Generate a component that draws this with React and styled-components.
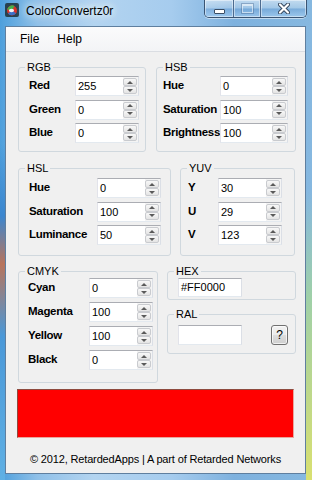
import React from "react";
import styled, { createGlobalStyle } from "styled-components";

const GlobalStyle = createGlobalStyle`
  html, body {
    margin: 0;
    padding: 0;
  }
  body {
    width: 312px;
    height: 480px;
    overflow: hidden;
    font-family: "Liberation Sans", Arial, sans-serif;
  }
`;

const Window = styled.div`
  width: 312px;
  height: 480px;
  display: flex;
  flex-direction: column;
  box-sizing: border-box;
  background:
    linear-gradient(to bottom, rgba(255, 255, 255, 0) 40%, #9fd0a8 62%, #d9e070 100%) right top / 6px 100% no-repeat,
    linear-gradient(to bottom, rgba(255, 255, 255, 0) 30%, #3b86cf 45%, #b8745c 55%, #4a98d8 70%, #5fb0e4 100%) left top / 5px 100% no-repeat,
    linear-gradient(to right, #4d9fdc 0%, #8fc0e8 12%, #b3d4f0 30%, #a6ccee 55%, #7eb1de 75%, #86b8e0 100%);
`;

const TitleBar = styled.div`
  height: 26px;
  display: flex;
  align-items: flex-start;
`;

const TitleIcon = styled.svg`
  margin: 3px 0 0 5px;
  flex: none;
`;

const TitleText = styled.span`
  margin: 4px 0 0 7px;
  font-size: 12px;
  line-height: 14px;
  color: #000;
  text-shadow: 0 0 6px #e8f3fc, 0 0 10px #e8f3fc, 0 0 14px #dceefa;
`;

const Captions = styled.div`
  margin-left: auto;
  margin-right: 5px;
  display: flex;
  height: 18px;
  box-sizing: border-box;
  border: 1px solid #3a5473;
  border-top: none;
  border-radius: 0 0 5px 5px;
  overflow: hidden;
  box-shadow: 0 1px 0 rgba(255, 255, 255, 0.5);
`;

const CaptionButton = styled.div`
  width: ${(p) => p.$w}px;
  height: 100%;
  box-sizing: border-box;
  display: flex;
  align-items: center;
  justify-content: center;
  border-left: ${(p) => (p.$first ? "none" : "1px solid #4d6b8f")};
  box-shadow: inset 0 0 0 1px rgba(255, 255, 255, 0.45);
  background: linear-gradient(
    to bottom,
    rgba(255, 255, 255, 0.5) 0%,
    rgba(255, 255, 255, 0.25) 48%,
    rgba(90, 140, 200, 0.25) 52%,
    rgba(190, 225, 255, 0.4) 100%
  );
`;

const MinGlyph = styled.div`
  width: 9px;
  height: 3px;
  margin-top: 5px;
  background: #fff;
  border: 1px solid #3a4e66;
  border-radius: 1px;
`;

const MaxGlyph = styled.div`
  width: 9px;
  height: 6px;
  border: 1px solid rgba(255, 255, 255, 0.55);
  border-top-width: 2px;
  box-shadow: 0 0 0 1px rgba(60, 90, 130, 0.35);
`;

const Client = styled.div`
  flex: 1;
  margin: 0 6px 6px 5px;
  background: #f0f0f0;
  border: 1px solid #5f7f9f;
  display: flex;
  flex-direction: column;
`;

const MenuBar = styled.div`
  height: 24px;
  display: flex;
  align-items: center;
  padding-left: 5px;
  background: linear-gradient(to bottom, #fbfbfc, #f3f4f6);
  border-bottom: 1px solid #dadde2;
`;

const MenuItem = styled.span`
  padding: 0 9px;
  font-size: 12px;
  line-height: 14px;
  color: #000;
`;

const Content = styled.div`
  padding: 9px 0 0 12px;
  display: flex;
  flex-direction: column;
`;

const Row = styled.div`
  display: flex;
  align-items: flex-start;
  gap: ${(p) => p.$gap}px;
  margin-top: ${(p) => p.$top || 0}px;
`;

const Column = styled.div`
  display: flex;
  flex-direction: column;
  gap: ${(p) => p.$gap}px;
`;

const Group = styled.fieldset`
  margin: 0;
  padding: 0;
  min-width: 0;
  width: ${(p) => p.$w}px;
  box-sizing: border-box;
  border: 1px solid #d0d8de;
  border-radius: 3px;
`;

const Legend = styled.legend`
  margin-left: 6px;
  padding: 0 2px;
  font-size: 11px;
  line-height: 13px;
  color: #000;
`;

const Body = styled.div`
  display: grid;
  grid-template-columns: ${(p) => p.$lw}px ${(p) => p.$sw}px;
  row-gap: ${(p) => p.$gap}px;
  align-items: center;
  padding: ${(p) => p.$pt}px 0 ${(p) => p.$pb}px ${(p) => p.$pl}px;
`;

const Label = styled.span`
  font-size: 11.5px;
  font-weight: bold;
  letter-spacing: -0.3px;
  line-height: 14px;
  color: #000;
  white-space: nowrap;
  margin-top: -2px;
`;

const SpinBox = styled.div`
  display: flex;
  height: 20px;
  box-sizing: border-box;
  border: 1px solid;
  border-color: #abadb3 #dbdfe6 #e3e9ef #e2e3ea;
  background: #fff;
`;

const Value = styled.span`
  flex: 1;
  padding-left: 2px;
  font-size: 11px;
  line-height: 18px;
  color: #000;
`;

const Arrows = styled.div`
  width: 15px;
  display: flex;
  flex-direction: column;
  padding: 1px 1px 1px 0;
  box-sizing: border-box;
  background: #f4f4f4;
`;

const ArrowButton = styled.div`
  flex: 1;
  display: flex;
  align-items: center;
  justify-content: center;
  border: 1px solid #c9cbcf;
  border-radius: 2px;
  background: linear-gradient(to bottom, #f8f8f8, #e4e4e4);
  &::after {
    content: "";
    border-left: 3px solid transparent;
    border-right: 3px solid transparent;
    ${(p) =>
      p.$up
        ? "border-bottom: 3px solid #5a5a5a;"
        : "border-top: 3px solid #5a5a5a;"}
  }
`;

const FieldRow = styled.div`
  display: flex;
  align-items: center;
  gap: ${(p) => p.$gap || 0}px;
  padding: ${(p) => p.$pt}px 0 ${(p) => p.$pb}px 10px;
`;

const TextBox = styled.div`
  width: 64px;
  height: ${(p) => p.$h}px;
  box-sizing: border-box;
  border: 1px solid;
  border-color: #abadb3 #dbdfe6 #e3e9ef #e2e3ea;
  background: #fff;
  padding-left: 2px;
  font-size: 11px;
  line-height: ${(p) => p.$h - 2}px;
  color: #000;
`;

const HelpButton = styled.div`
  width: 17px;
  height: 20px;
  box-sizing: border-box;
  border: 1px solid #707070;
  border-radius: 3px;
  background: linear-gradient(to bottom, #f2f2f2 0%, #ebebeb 48%, #dddddd 52%, #cfcfcf 100%);
  box-shadow: inset 0 0 0 1px rgba(255, 255, 255, 0.7);
  display: flex;
  align-items: center;
  justify-content: center;
  font-size: 12px;
  color: #000;
`;

const Swatch = styled.div`
  margin: 6px 0 0 -1px;
  width: 277px;
  height: 49px;
  box-sizing: border-box;
  background: ${(p) => p.$color};
  border: 1px solid;
  border-color: #8e4a3e #e9a69d #e9a69d #8e4a3e;
`;

const Footer = styled.div`
  margin-top: 15px;
  text-align: center;
  font-size: 11px;
  line-height: 13px;
  letter-spacing: -0.15px;
  color: #000;
`;

function Spinner({ value, width }) {
  return (
    <SpinBox style={{ width }}>
      <Value>{value}</Value>
      <Arrows>
        <ArrowButton $up />
        <ArrowButton />
      </Arrows>
    </SpinBox>
  );
}

function ValueGroup({ title, fields, w, pl, lw, sw, pt, pb, gap }) {
  return (
    <Group $w={w}>
      <Legend>{title}</Legend>
      <Body $lw={lw} $sw={sw} $pt={pt} $pb={pb} $pl={pl} $gap={gap}>
        {fields.map(([label, value]) => (
          <React.Fragment key={label}>
            <Label>{label}</Label>
            <Spinner value={value} width={sw} />
          </React.Fragment>
        ))}
      </Body>
    </Group>
  );
}

function AppIcon() {
  return (
    <TitleIcon width="14" height="14" viewBox="0 0 14 14">
      <rect x="0" y="0" width="14" height="14" rx="2" fill="#27414f" />
      <circle cx="7" cy="7.5" r="5" fill="#d8322a" />
      <path d="M2.2 6.5 A5 5 0 0 1 9.5 3 L7 7.5 Z" fill="#46b04a" />
      <path d="M3 10.5 A5 5 0 0 0 11 10.2 L7 7.5 Z" fill="#3b6fc8" />
      <ellipse cx="6.5" cy="7.5" rx="2.6" ry="1.8" fill="#f4f4f4" />
    </TitleIcon>
  );
}

function CloseGlyph() {
  return (
    <svg width="12" height="11" viewBox="0 0 12 11">
      <path d="M2 1.5 L10 9.5 M10 1.5 L2 9.5" stroke="#34465c" strokeWidth="4" strokeLinecap="round" />
      <path d="M2 1.5 L10 9.5 M10 1.5 L2 9.5" stroke="#ffffff" strokeWidth="2.2" strokeLinecap="round" />
    </svg>
  );
}

export default function App() {
  return (
    <>
      <GlobalStyle />
      <Window>
        <TitleBar>
          <AppIcon />
          <TitleText>ColorConvertz0r</TitleText>
          <Captions>
            <CaptionButton $w={28} $first>
              <MinGlyph />
            </CaptionButton>
            <CaptionButton $w={27}>
              <MaxGlyph />
            </CaptionButton>
            <CaptionButton $w={46}>
              <CloseGlyph />
            </CaptionButton>
          </Captions>
        </TitleBar>
        <Client>
          <MenuBar>
            <MenuItem>File</MenuItem>
            <MenuItem>Help</MenuItem>
          </MenuBar>
          <Content>
            <Row $gap={10}>
              <ValueGroup
                title="RGB"
                fields={[["Red", "255"], ["Green", "0"], ["Blue", "0"]]}
                w={128} pl={10} lw={46} sw={64} pt={2} pb={8} gap={3.5}
              />
              <ValueGroup
                title="HSB"
                fields={[["Hue", "0"], ["Saturation", "100"], ["Brightness", "100"]]}
                w={140} pl={6} lw={57} sw={68} pt={2} pb={8} gap={3.5}
              />
            </Row>
            <Row $gap={9} $top={10}>
              <ValueGroup
                title="HSL"
                fields={[["Hue", "0"], ["Saturation", "100"], ["Luminance", "50"]]}
                w={153} pl={10} lw={68} sw={64} pt={3} pb={10} gap={3.5}
              />
              <ValueGroup
                title="YUV"
                fields={[["Y", "30"], ["U", "29"], ["V", "123"]]}
                w={115} pl={7} lw={30} sw={64} pt={3} pb={10} gap={3.5}
              />
            </Row>
            <Row $gap={9} $top={9}>
              <ValueGroup
                title="CMYK"
                fields={[["Cyan", "0"], ["Magenta", "100"], ["Yellow", "100"], ["Black", "0"]]}
                w={140} pl={9} lw={61} sw={64} pt={0} pb={12} gap={4}
              />
              <Column $gap={8}>
                <Group $w={129}>
                  <Legend>HEX</Legend>
                  <FieldRow $pt={0} $pb={2}>
                    <TextBox $h={19}>#FF0000</TextBox>
                  </FieldRow>
                </Group>
                <Group $w={129}>
                  <Legend>RAL</Legend>
                  <FieldRow $pt={4} $pb={8} $gap={29}>
                    <TextBox $h={20} />
                    <HelpButton>?</HelpButton>
                  </FieldRow>
                </Group>
              </Column>
            </Row>
            <Swatch $color="#ff0000" />
          </Content>
          <Footer>© 2012, RetardedApps | A part of Retarded Networks</Footer>
        </Client>
      </Window>
    </>
  );
}
